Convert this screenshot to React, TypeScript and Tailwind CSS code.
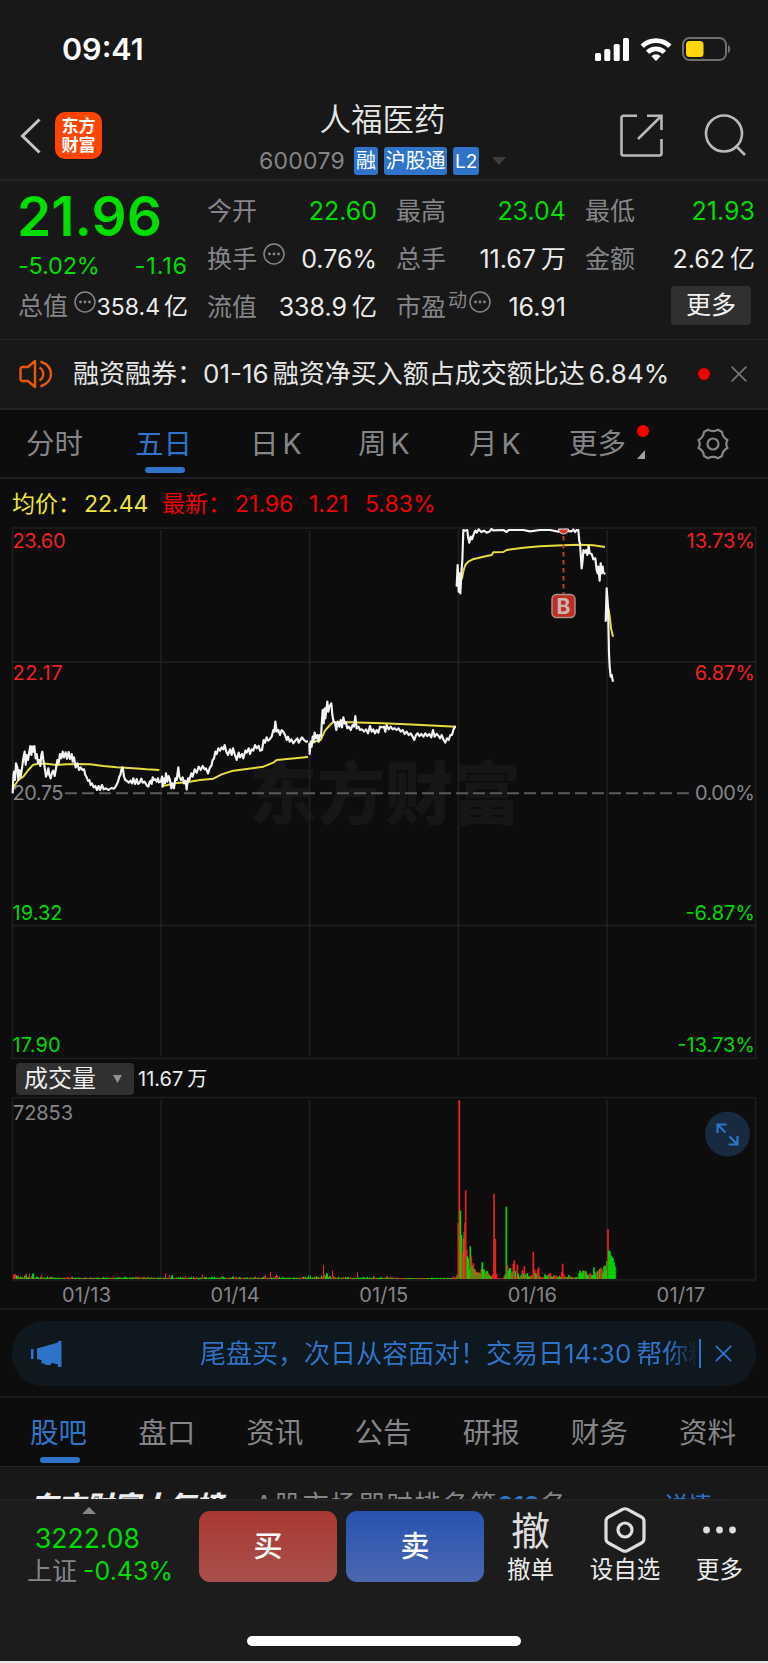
import type { ReactNode } from "react";

type Pt = string;

const PRICE_A: Pt[] = [
  "38,340 40,290 42,275 45,300 48,250 52,262 55,300 58,270 62,290 66,265 70,235 74,215 77,255 80,225 84,240 88,215 91,198 94,225 97,200 100,215 103,198 107,235 110,222 114,248 117,240 121,258 124,225 127,215 130,240 134,262 138,290 142,280 145,265 148,285 152,295 156,278 160,272 164,288 168,265 172,240 176,250 180,222 184,235 188,215 192,232 197,217 201,236 206,216 210,237 215,222 218,245 222,232 227,262 232,250 237,270 242,262 247,270 252,268 256,285 260,292 264,303 268,300 272,315 276,310 281,322 286,318 291,330 296,318 300,330 306,315 311,328 318,325 326,330 334,324 342,326 348,318 354,305 358,290 361,285 364,270 368,262 372,290 376,300 381,303 386,308 391,302 396,310 400,295 405,312 410,297 414,312 419,308 424,296 428,308 434,305 440,316 445,320 449,305 452,302 455,312 458,292 462,300 466,298 470,305 474,295 478,310",
  "482,308 486,290 488,320 491,295 495,310 498,280 502,305 506,288 510,300 514,325 517,310 522,325 526,295 530,300 535,262 538,290 543,300 548,292 552,310 556,302 560,328 564,295 568,300 574,280 578,290 584,268 590,278 596,260 602,270 608,258 614,268 618,265 624,280 630,262 634,258 638,240 642,236 646,215 650,222 655,205 660,212 665,202 670,208 674,195 679,215 684,225 690,208 695,225 699,205 704,222 710,240 716,218 720,232 726,222 730,235 736,212 740,218 746,205 750,222 755,208 760,212 765,195 770,205 776,198 780,212 786,210 791,180 795,188 800,172 804,182 809,178 815,170 820,150 823,155 826,125 830,155 835,150 840,165 845,150 850,155 855,165 860,180 864,170 869,185 874,178 880,190 886,182 892,175 896,188 901,180 906,172 912,180 918,185 924,184",
  "928,190 929,222 932,185 935,200 938,170 941,185 944,158 948,175 952,165 956,185 959,165 963,170 966,120 968,90 971,130 974,85 976,115 979,90 982,65 985,95 988,80 991,75 994,70 997,105 1001,125 1005,128 1009,150 1013,125 1018,140 1022,120 1026,142 1030,112 1034,130 1038,128 1042,145 1047,140 1052,150 1058,135 1062,140 1066,108 1070,145 1076,140 1080,150 1086,148 1092,155 1098,148 1104,160 1110,138 1115,155 1120,148 1125,160 1130,150 1135,158 1140,140 1146,142 1152,140 1156,155 1160,135 1166,148 1172,140 1178,148 1184,145 1190,150 1196,145 1202,155 1208,150 1214,162 1220,155 1226,165 1232,160 1238,170 1243,180 1248,165 1253,160 1258,168 1264,162 1270,170 1276,160 1282,168 1288,162 1294,172 1299,150 1304,170 1310,162 1316,168 1320,175 1325,165 1330,178 1336,188 1341,175 1346,180 1351,165 1356,165 1360,150 1366,138",
];
const AVG_A: Pt[] = [
  "38,330 45,315 55,300 70,290 85,270 100,254 115,251 140,251 170,255 200,253 230,252 270,253 310,258 350,262 400,265 440,268 478,270",
  "485,318 500,316 530,309 560,307 600,300 640,296 665,283 700,272 740,267 790,260 820,248 830,240 870,236 924,231",
  "930,192 950,183 962,180 975,152 990,135 998,127 1050,127 1150,130 1250,134 1368,140",
];
const PRICE_B: Pt[] = [
  "50,230 53,165 56,245 58,190 61,250 64,190 67,150 70,60 76,62 82,60 84,80 88,98 92,80 96,88 102,70 106,62 110,68 116,58 124,66 132,62 140,68 150,64 154,57 160,61 190,60 200,66 206,60 250,60 270,64 300,60 330,60 355,65 370,62 395,64 400,58 405,66 410,60 415,60 418,95 420,100 422,130 425,175 428,150 430,120 435,128 438,120 442,135 446,108 449,130 455,132 460,148 466,145 470,180 473,190 475,170 479,212 482,160 485,190 488,170 490,188 496,192",
  "497,335 500,235 502,262 504,290 505,335 507,430 509,470 512,500 515,495 519,515",
];
const AVG_B: Pt[] = [
  "60,215 66,205 71,180 76,165 85,155 98,148 112,145 130,140 155,135 160,127 190,126 200,120 250,113 300,109 370,106 420,104 460,106 495,111",
  "499,330 506,298 510,325 513,355 519,380",
];

const RED = "#f02020";
const GREEN = "#00d800";

/* [x, height, rising] in thirds of a pixel from the left edge of the 01/16 session */
const HEAVY: [number, number, 0 | 1][] = [
  [160, 8, 1], [164, 5, 1], [168, 6, 1], [172, 13, 0], [175, 168, 1], [178, 536, 1], [181, 205, 0], [184, 132, 0], [187, 83, 1], [190, 122, 1], [193, 142, 0], [195, 168, 1], [197, 266, 1], [200, 88, 1], [202, 68, 0], [205, 62, 0], [208, 30, 0], [211, 98, 0], [214, 68, 1], [217, 40, 0], [220, 47, 1], [223, 30, 0], [226, 28, 1], [229, 20, 0], [232, 21, 1], [235, 18, 0], [238, 20, 1], [241, 17, 0], [244, 30, 1], [247, 50, 0], [250, 30, 0], [253, 26, 0], [256, 16, 1], [259, 22, 0], [262, 24, 0], [265, 18, 1], [268, 12, 0], [271, 9, 0], [274, 8, 1], [277, 8, 0], [279, 15, 1], [282, 256, 1], [286, 120, 1], [289, 15, 1], [292, 3, 1], [298, 3, 1], [304, 3, 1], [310, 4, 1], [313, 8, 1], [316, 14, 0], [319, 217, 0], [322, 42, 1], [325, 24, 0], [328, 32, 0], [331, 32, 0], [334, 18, 1], [337, 22, 0], [340, 46, 1], [343, 56, 1], [346, 24, 0], [349, 8, 1], [352, 43, 1], [355, 16, 0], [358, 5, 0], [361, 8, 1], [364, 12, 0], [367, 26, 1], [370, 18, 0], [373, 38, 1], [376, 14, 0], [379, 10, 1], [382, 18, 0], [385, 8, 0], [388, 7, 0], [391, 8, 0], [394, 12, 1], [397, 10, 1], [400, 82, 1], [404, 28, 1], [407, 18, 0], [410, 14, 0], [413, 28, 1], [416, 35, 1], [419, 8, 0], [422, 4, 1], [425, 5, 1], [428, 6, 1], [432, 5, 1], [435, 14, 0], [438, 10, 0], [441, 6, 0], [444, 12, 0], [447, 16, 1], [451, 18, 1], [454, 8, 0], [458, 6, 1], [461, 10, 0], [464, 8, 1], [468, 11, 1], [471, 7, 1], [474, 5, 0], [478, 10, 0], [481, 6, 0], [485, 20, 1], [488, 46, 1], [491, 15, 1], [494, 8, 1], [497, 5, 0], [500, 4, 1], [503, 5, 0], [507, 12, 0], [510, 5, 1], [514, 7, 0], [518, 6, 1], [522, 4, 1], [526, 5, 0], [530, 6, 0], [534, 8, 1], [537, 17, 0], [540, 25, 0], [543, 20, 0], [546, 14, 0], [549, 25, 0], [552, 22, 0], [555, 25, 1], [558, 23, 0], [561, 14, 0], [564, 12, 0], [567, 8, 0], [570, 18, 1], [573, 14, 1], [576, 10, 0], [579, 12, 0], [582, 35, 0], [585, 20, 0], [588, 14, 0], [591, 22, 1], [594, 24, 0], [597, 26, 1], [600, 30, 0], [603, 34, 1], [606, 30, 1], [609, 18, 0], [612, 38, 0], [615, 40, 0], [618, 26, 0], [621, 54, 0], [624, 150, 1], [627, 86, 0], [630, 82, 0], [633, 70, 0], [636, 66, 0], [639, 62, 0], [642, 50, 0], [645, 38, 0],
];

const SPIKES: Record<number, [number, 0 | 1]> = {
  40: [12, 1], 43: [16, 1], 46: [14, 1], 49: [11, 0], 52: [9, 0], 55: [10, 1], 61: [8, 0], 73: [10, 0], 76: [14, 1], 79: [14, 0], 88: [16, 1], 94: [9, 1], 97: [16, 0], 100: [17, 0], 112: [7, 0], 124: [13, 1], 142: [8, 0], 154: [7, 0],
  496: [17, 1], 508: [12, 1], 514: [10, 0], 517: [12, 0], 541: [7, 0], 556: [9, 1], 589: [7, 1], 607: [14, 1], 643: [8, 0], 664: [9, 1], 700: [8, 0], 766: [8, 1], 793: [9, 1], 796: [13, 1], 811: [21, 1], 826: [9, 1], 829: [14, 1], 832: [10, 1], 925: [10, 0], 931: [10, 0],
  949: [8, 0], 964: [10, 0], 970: [41, 1], 973: [14, 1], 976: [10, 0], 979: [18, 0], 982: [16, 0], 988: [10, 1], 991: [9, 0], 997: [26, 1], 1000: [9, 1], 1072: [20, 1], 1120: [8, 0], 1162: [8, 1], 1180: [7, 1],
};

const LIGHT = Array.from({ length: 440 }, (_, i) => {
  const x = 40 + i * 3;
  const spike = SPIKES[x];
  const wave = (i * 7919 + ((i * i) % 37)) % 11;
  return {
    x,
    h: spike ? spike[0] : x > 1200 ? 3 + (wave > 9 ? 1 : 0) : 3.5 + (wave > 8 ? 3 : wave > 6 ? 1 : 0),
    c: (spike ? spike[1] : wave % 3 === 0) ? RED : GREEN,
  };
});

function Dots({ className = "" }: { className?: string }) {
  return (
    <svg viewBox="0 0 22 22" className={`size-[22px] shrink-0 ${className}`} fill="none" stroke="#85858a" strokeWidth="1.5">
      <circle cx="11" cy="11" r="10" />
      <g fill="#85858a" stroke="none">
        <circle cx="6.5" cy="11" r="1.4" />
        <circle cx="11" cy="11" r="1.4" />
        <circle cx="15.5" cy="11" r="1.4" />
      </g>
    </svg>
  );
}

function Cell({
  label,
  value,
  unit,
  green,
  extra,
}: {
  label: string;
  value: string;
  unit?: string;
  green?: boolean;
  extra?: ReactNode;
}) {
  return (
    <div className="flex items-center justify-between whitespace-nowrap text-[25px] leading-none">
      <span className="-ml-px flex items-center text-[#85858a]">
        {label}
        {extra}
      </span>
      <span className={green ? "text-[#00dc00]" : "text-[#ececec]"}>
        {value}
        {unit && <span className="ml-[5px]">{unit}</span>}
      </span>
    </div>
  );
}

function StatusBar() {
  return (
    <div className="flex h-[98px] items-center justify-between pl-[62px] pr-[37px]">
      <span className="text-[30.5px] font-semibold leading-none text-white">09:41</span>
      <div className="flex items-center gap-[10px]">
        <svg viewBox="0 0 35 23" className="h-[23px] w-[35px]" fill="#fff">
          <rect x="0" y="15" width="6" height="8" rx="1.6" />
          <rect x="9.3" y="11" width="6" height="12" rx="1.6" />
          <rect x="18.7" y="6" width="6" height="17" rx="1.6" />
          <rect x="28" y="0" width="6" height="23" rx="1.6" />
        </svg>
        <svg viewBox="0 0 32 24" className="h-[24px] w-[32px]" fill="none" stroke="#fff" strokeWidth="4.8">
          <path d="M2.2 9.3a19.600 19.600 0 0 1 27.600 0" />
          <path d="M7.6 15.400a12 12 0 0 1 16.8 0" />
          <path d="M16 24l-4.6-4.8a6.6 6.6 0 0 1 9.2 0z" fill="#fff" stroke="none" />
        </svg>
        <svg viewBox="0 0 49 24" className="h-[24px] w-[49px]">
          <rect x="1" y="1" width="43" height="22" rx="6.5" fill="none" stroke="#6f6f6f" strokeWidth="2" />
          <path d="M46 8c3 1 3 7 0 8z" fill="#6f6f6f" />
          <rect x="4" y="4" width="17.5" height="16" rx="3.5" fill="#ffd60a" />
        </svg>
      </div>
    </div>
  );
}

function Header() {
  return (
    <div className="grid h-[83px] grid-cols-[1fr_auto_1fr] border-b-2 border-[#252525]">
      <div className="flex items-start pl-[20px] pt-[14px]">
        <svg viewBox="0 0 22 36" className="mt-[6px] h-[36px] w-[22px]" fill="none" stroke="#c4c4c4" strokeWidth="3">
          <path d="M19.5 1.5L2.5 18l17 16.5" />
        </svg>
        <div className="ml-[13px] flex size-[47px] flex-col items-center justify-center rounded-[10px] bg-[#ff4400] text-[17px] font-bold leading-[19px] text-white">
          <span>东方</span>
          <span>财富</span>
        </div>
      </div>
      <div className="flex flex-col items-center pr-[3px]">
        <h1 className="mt-[5px] text-[31.5px] font-[350] leading-[34px] text-[#e6e6e6]">人福医药</h1>
        <div className="mt-[10px] flex h-[28px] items-center text-[22px] leading-none text-white">
          <span className="mr-[9px] text-[23px] tracking-[0.3px] text-[#85858a]">600079</span>
          <span className="mr-[6px] flex h-[28px] w-[24px] items-center justify-center rounded-[3px] bg-[#2f74c8] text-[20px]">融</span>
          <span className="mr-[6px] flex h-[28px] w-[63px] items-center justify-center rounded-[3px] bg-[#2f74c8] text-[20px]">沪股通</span>
          <span className="flex h-[28px] w-[26px] items-center justify-center rounded-[3px] bg-[#2f74c8] text-[19px]">L2</span>
          <svg viewBox="0 0 14 8" className="ml-[13px] h-[8px] w-[14px]" fill="#3e3e40">
            <path d="M0 0h14L7 8z" />
          </svg>
        </div>
      </div>
      <div className="flex items-start justify-end gap-[41px] pr-[21px] pt-[16px]">
        <svg viewBox="0 0 43 43" className="size-[43px]" fill="none" stroke="#b9b9b9" strokeWidth="2.6">
          <path d="M17 1.8H3.5a2 2 0 0 0-2 2v35.700a2 2 0 0 0 2 2h36a2 2 0 0 0 2-2V25" />
          <path d="M27 1.800h14.500V16M40.500 2.800L18 25" />
        </svg>
        <svg viewBox="0 0 43 43" className="size-[43px]" fill="none" stroke="#b9b9b9" strokeWidth="2.6">
          <circle cx="20" cy="19.500" r="18" />
          <path d="M31.500 31.500l9.500 9.500" />
        </svg>
      </div>
    </div>
  );
}

function Quote() {
  return (
    <div className="flex h-[159px] gap-[20px] border-b border-[#232325] pl-[19px] pt-[7px]">
      <div className="flex w-[169px] flex-col">
        <div className="-ml-[2px] flex h-[55px] items-center pt-px text-[55px] font-semibold leading-none text-[#00dc00]">21.96</div>
        <div className="-ml-px flex h-[40px] items-center justify-between pt-[6px] text-[23.500px] leading-none text-[#00dc00]">
          <span className="tracking-[-0.2px]">-5.02%</span>
          <span className="tracking-[0.8px]">-1.16</span>
        </div>
        <div className="flex h-[47px] items-center whitespace-nowrap text-[25px] leading-none">
          <span className="-ml-px text-[#85858a]">总值</span>
          <Dots className="mb-[10px] ml-[6px]" />
          <span className="flex-1 text-right text-[23px] text-[#ececec]">
            358.4<span className="ml-[4px] text-[24px]">亿</span>
          </span>
        </div>
      </div>
      <div className="grid h-[143px] grid-cols-[169px_169px_169px] grid-rows-3 gap-x-[20px]">
        <Cell label="今开" value="22.60" green />
        <Cell label="最高" value="23.04" green />
        <Cell label="最低" value="21.93" green />
        <Cell label="换手" value="0.76%" extra={<Dots className="mb-[10px] ml-[6px]" />} />
        <Cell label="总手" value="11.67" unit="万" />
        <Cell label="金额" value="2.62" unit="亿" />
        <Cell label="流值" value="338.9" unit="亿" />
        <Cell
          label="市盈"
          value="16.91"
          extra={
            <>
              <span className="mb-[14px] ml-[2px] text-[19px]">动</span>
              <Dots className="mb-[10px] ml-[2px]" />
            </>
          }
        />
        <div className="flex items-center justify-end pb-[3px] pr-[4px]">
          <button className="h-[39px] w-[80px] rounded-[4px] bg-[#303030] text-[25px] leading-none text-[#f2f2f2]">更多</button>
        </div>
      </div>
    </div>
  );
}

function News() {
  return (
    <div className="flex h-[70px] items-center border-b-2 border-[#252525] pl-[19px] pr-[21px]">
      <svg viewBox="0 0 34 30" className="h-[30px] w-[34px]" fill="none" stroke="#e8590c" strokeWidth="2.400" strokeLinejoin="round">
        <path d="M16 2v26l-7-6H3.500A2 2 0 0 1 1.500 20V10a2 2 0 0 1 2-2H9z" />
        <path d="M20.500 8.500c5 3 5 10 0 13M21.500 2.500c14 5 14 20 0 25" />
      </svg>
      <span className="ml-[20px] flex-1 whitespace-nowrap text-[26px] leading-none text-[#e6e6e6]">
        融资融券：01-16<span className="mx-[4px]">融资净买入额占成交额比达</span>6.84%
      </span>
      <span className="mr-[21px] size-[12px] rounded-full bg-[#f00000]" />
      <svg viewBox="0 0 16 16" className="size-[16px]" stroke="#77777a" strokeWidth="1.600">
        <path d="M.6.6l14.800 14.800M15.400.6L.6 15.400" />
      </svg>
    </div>
  );
}

function PeriodTabs() {
  return (
    <div className="flex h-[69px] items-center border-b-2 border-[#1f1f20] pl-[26px] pt-[2px] text-[28.500px] leading-none text-[#85858a]">
      <span className="w-[109px]">分时</span>
      <span className="relative w-[115px] text-[#2f74c8]">
        五日
        <i className="absolute -bottom-[14px] left-[10px] h-[6px] w-[40px] rounded-[3px] bg-[#2f74c8]" />
      </span>
      <span className="w-[108px]">日<span className="ml-[4px]">K</span></span>
      <span className="w-[111px]">周<span className="ml-[4px]">K</span></span>
      <span className="w-[100px]">月<span className="ml-[4px]">K</span></span>
      <span className="relative w-[128px]">
        更多
        <i className="absolute -top-[5px] left-[68px] size-[12px] rounded-full bg-[#ff0000]" />
        <svg viewBox="0 0 8 9" className="absolute left-[68px] top-[20px] h-[9px] w-[8px]" fill="#a0a0a4">
          <path d="M8 0v9H0z" />
        </svg>
      </span>
      <svg viewBox="0 0 32 32" className="-mt-[2px] size-[32px]" fill="none" stroke="#85858a" strokeWidth="2.200" strokeLinejoin="round">
        <path d="M11 1.800Q16 4.500 21 1.800L25 4Q25.500 9.500 30.500 12Q28 16 30.500 20Q25.500 22.500 25 28L21 30.200Q16 27.500 11 30.200L7 28Q6.500 22.500 1.500 20Q4 16 1.500 12Q6.500 9.500 7 4z" />
        <circle cx="16" cy="16" r="5.500" />
      </svg>
    </div>
  );
}

const GRID_X = [161, 309.5, 458.5, 607];

function PriceChart() {
  const labels: [number, string, string, string][] = [
    [547.5, "23.60", "13.73%", RED],
    [680, "22.17", "6.87%", RED],
    [919.5, "19.32", "-6.87%", GREEN],
    [1051.5, "17.90", "-13.73%", GREEN],
  ];
  return (
    <svg viewBox="0 527 768 532" className="block h-[532px] w-[768px]" fontSize="20">
      <text x="249" y="819" fontSize="68" fontWeight="900" fill="#161617">东方财富</text>
      <g stroke="#202022" strokeWidth="1.500" fill="none">
        <rect x="12.500" y="528" width="743" height="530.500" />
        {GRID_X.map((x) => (
          <path key={x} d={`M${x} 530V1056`} />
        ))}
        <path d="M12 662H755M12 925.500H755" />
      </g>
      <path d="M65 793.300H694" stroke="#5a5a60" strokeWidth="1.900" strokeDasharray="12 5" />
      <g fill="none" strokeLinejoin="round">
        <g transform="translate(0 680) scale(.33333)">
          {AVG_A.map((p, i) => <polyline key={i} points={p} stroke="#e6dc3c" strokeWidth="6" />)}
          {PRICE_A.map((p, i) => <polyline key={i} points={p} stroke="#f4f4f4" strokeWidth="6.500" />)}
        </g>
        <g transform="translate(440 510) scale(.33333)">
          {AVG_B.map((p, i) => <polyline key={i} points={p} stroke="#e6dc3c" strokeWidth="6" />)}
          {PRICE_B.map((p, i) => <polyline key={i} points={p} stroke="#f4f4f4" strokeWidth="6.500" />)}
        </g>
      </g>
      {labels.map(([y, left, right, color]) => (
        <g key={y} fill={color}>
          <text x="12.500" y={y} textLength={left === "17.90" ? 48 : left === "23.60" ? 53 : 50} lengthAdjust="spacing">{left}</text>
          <text x="755" y={y} textAnchor="end">{right}</text>
        </g>
      ))}
      <g fill="#85858a">
        <text x="12.500" y="800" textLength="51" lengthAdjust="spacing">20.75</text>
        <text x="755" y="800" textAnchor="end" textLength="60" lengthAdjust="spacing">0.00%</text>
      </g>
      <path d="M558.500 529a5 5 0 0 0 10 0z" fill="#d63a2c" stroke="#eee" strokeWidth="1" />
      <path d="M563.500 536V594" stroke="#cc3a2c" strokeWidth="1.800" strokeDasharray="4.500 3.500" />
      <rect x="552" y="594.500" width="23" height="23" rx="4.500" fill="#bf2e20" stroke="#a8908c" strokeWidth="1.500" />
      <text x="563.500" y="613.500" fontWeight="700" fontSize="21" textAnchor="middle" fill="#c9b4b4">B</text>
    </svg>
  );
}

function VolumeChart() {
  return (
    <svg viewBox="0 1097 768 211" className="block h-[211px] w-[768px]" fontSize="20">
      <g stroke="#202022" strokeWidth="1.500" fill="none">
        <rect x="12.500" y="1097.500" width="743" height="182.500" />
        {GRID_X.map((x) => (
          <path key={x} d={`M${x} 1100V1279`} />
        ))}
      </g>
      <g transform="scale(.33333)">
        {LIGHT.map((b) => (
          <rect key={b.x} x={b.x - 1} y={3837 - b.h} width="3" height={b.h} fill={b.c} />
        ))}
      </g>
      <g transform="translate(400 0) scale(.33333)">
        {HEAVY.map(([x, h, up]) => (
          <rect key={x} x={x - 2.500} y={3837 - h} width="5" height={h} fill={up ? RED : GREEN} />
        ))}
      </g>
      <g fill="#85858a">
        <text x="13" y="1119.500" textLength="60" lengthAdjust="spacing">72853</text>
        {["01/13", "01/14", "01/15", "01/16", "01/17"].map((d, i) => (
          <text key={d} x={86.500 + i * 148.600} y="1302" textAnchor="middle" textLength="49" lengthAdjust="spacing">{d}</text>
        ))}
      </g>
      <circle cx="727.500" cy="1134" r="22.500" fill="#172a40" />
      <path d="M725.500 1132.500l-7.500-7.500M717.500 1133v-8.500h9M729.500 1136.500l7.500 7.500M737.500 1136v8.500h-9" fill="none" stroke="#2f74c8" strokeWidth="2.200" />
    </svg>
  );
}

function Banner() {
  return (
    <div className="h-[90px] border-y-2 border-[#19191a] px-[12px] pt-[11px]">
      <div className="flex h-[65px] items-center rounded-[32px] bg-[#10181f] pl-[19px] pr-[24px] text-[#2f74c8]">
        <svg viewBox="0 0 31 26" className="h-[26px] w-[31px]" fill="currentColor">
          <rect x="0" y="8" width="2.500" height="10" />
          <path d="M6 7.500L27 1.500V0h3.500v26H27v-2.500l-6-1.800-1.500 2.300h-5l-1.200-1.500h-2.800v-3.500L6 18z" />
        </svg>
        <div className="ml-[138px] w-[498px] overflow-hidden whitespace-nowrap text-[26px] leading-[34px] [mask-image:linear-gradient(to_right,#000_94%,transparent)]">
          尾盘买，次日从容面对！交易日14:30<span className="ml-[5px]">帮你精选</span>
        </div>
        <i className="ml-px h-[29px] w-[1.500px] bg-[#2f74c8]" />
        <svg viewBox="0 0 17 17" className="ml-auto size-[17px]" stroke="currentColor" strokeWidth="1.800">
          <path d="M.8.8l15.400 15.400M16.200.8L.8 16.200" />
        </svg>
      </div>
    </div>
  );
}

function SectionTabs() {
  return (
    <div className="flex h-[69px] items-center justify-between border-b border-[#252525] pl-[30px] pr-[32px] pt-[3px] text-[28.500px] leading-none text-[#85858a]">
      <span className="relative text-[#2f74c8]">
        股吧
        <i className="absolute -bottom-[15px] left-[10px] h-[6px] w-[40px] rounded-[3px] bg-[#2f74c8]" />
      </span>
      {["盘口", "资讯", "公告", "研报", "财务", "资料"].map((t) => (
        <span key={t}>{t}</span>
      ))}
    </div>
  );
}

function Action({ icon, label }: { icon: ReactNode; label: string }) {
  return (
    <div className="flex flex-col items-center">
      <div className="flex h-[48px] items-center">{icon}</div>
      <span className="mt-[3px] text-[23.500px] leading-[26px] text-[#ececec]">{label}</span>
    </div>
  );
}

function BottomBar() {
  return (
    <div className="flex h-[164px] flex-col border-b-2 border-t-2 border-b-[#e8e8e8] border-t-[#222] bg-[#1c1c1c]">
      <div className="flex pl-[27px] pt-[5px]">
        <div className="flex w-[172px] flex-col">
          <svg viewBox="0 0 14 7" className="ml-[55px] mt-[1px] h-[7px] w-[14px]" fill="#85858a">
            <path d="M0 7h14L7 0z" />
          </svg>
          <span className="ml-[8px] mt-[10px] text-[26.500px] leading-[28px] text-[#00dc00]">3222.08</span>
          <span className="mt-[5px] flex items-center whitespace-nowrap text-[25px] leading-[28px] text-[#85858a]">
            上证<b className="ml-[6px] font-normal text-[#00dc00]">-0.43%</b>
          </span>
        </div>
        <button className="mt-[5px] h-[71px] w-[138px] rounded-[11px] bg-linear-to-b from-[#a93731] to-[#a8504c] text-[29px] font-medium text-white">买</button>
        <button className="ml-[9px] mt-[5px] h-[71px] w-[138px] rounded-[11px] bg-linear-to-b from-[#2852b0] to-[#4a68b0] text-[29px] font-medium text-white">卖</button>
        <div className="ml-[23px] flex w-[236px] justify-between">
          <Action icon={<span className="text-[39px] leading-none text-[#dedede]">撤</span>} label="撤单" />
          <Action
            label="设自选"
            icon={
              <svg viewBox="0 0 42 46" className="size-[46px]" fill="none" stroke="#dedede" strokeWidth="3.200" strokeLinejoin="round">
                <path d="M18.500 2.400q2.500-1.300 5 0L37.500 10q2.500 1.500 2.500 4V32q0 2.500-2.500 4L23.500 43.600q-2.500 1.300-5 0L4.500 36Q2 34.500 2 32V14q0-2.500 2.500-4z" />
                <circle cx="21" cy="23" r="7" />
              </svg>
            }
          />
          <Action
            label="更多"
            icon={
              <svg viewBox="0 0 33 8" className="h-[8px] w-[33px]" fill="#dedede">
                <circle cx="3.500" cy="4" r="3.400" />
                <circle cx="16.500" cy="4" r="3.400" />
                <circle cx="29.500" cy="4" r="3.400" />
              </svg>
            }
          />
        </div>
      </div>
      <div className="mx-auto mb-[15px] mt-auto h-[10px] w-[274px] rounded-full bg-white" />
    </div>
  );
}

export default function App() {
  return (
    <div className="flex h-[1663px] w-[768px] flex-col overflow-hidden bg-[#0d0d0d] font-['Inter','Noto_Sans_CJK_SC',sans-serif]">
      <div className="bg-[#181818]">
        <StatusBar />
        <Header />
        <Quote />
        <News />
      </div>
      <PeriodTabs />
      <div className="flex h-[48px] items-center whitespace-pre pl-[12px] pt-[2px] text-[23px] leading-none text-[#f00000]">
        <span className="w-[72px] text-[#ebe33c]">均价：</span>
        <span className="w-[78px] text-[#ebe33c]">22.44</span>
        <span className="w-[73px]">最新：</span>
        <span className="w-[74px]">21.96</span>
        <span className="w-[56px]">1.21</span>
        <span>5.83%</span>
      </div>
      <PriceChart />
      <div className="flex h-[38px] items-center pl-[16px] pt-px text-[20px] leading-none text-[#ececec]">
        <button className="flex h-[32px] w-[118px] items-center rounded-[4px] bg-[#303030] pl-[8px] text-[24px]">
          成交量
          <svg viewBox="0 0 9 8" className="ml-[17px] h-[8px] w-[9px]" fill="#909094">
            <path d="M0 0h9L4.500 8z" />
          </svg>
        </button>
        <span className="ml-[4px]">
          11.67<span className="ml-[4px]">万</span>
        </span>
      </div>
      <VolumeChart />
      <Banner />
      <SectionTabs />
      <div className="h-[32px] overflow-hidden bg-[#181818] pl-[30px] pr-[36px]">
        <div className="mt-[22px] flex items-center whitespace-nowrap text-[26px] leading-[32px]">
          <b className="w-[225px] text-[27.500px] font-black italic text-[#ececec]">东方财富人气榜</b>
          <span className="text-[26px] tracking-[1.900px] text-[#85858a]">
            A股市场即时排名第<b className="text-[24px] tracking-[0.300px] text-[#2f74c8]">213</b>名
          </span>
          <span className="ml-auto flex items-center text-[24px] text-[#2f74c8]">
            详情
            <svg viewBox="0 0 16 16" className="ml-[4px] size-[16px]" fill="none" stroke="currentColor" strokeWidth="2">
              <path d="M1 1l6 7-6 7M8.500 1l6 7-6 7" />
            </svg>
          </span>
        </div>
      </div>
      <BottomBar />
    </div>
  );
}
